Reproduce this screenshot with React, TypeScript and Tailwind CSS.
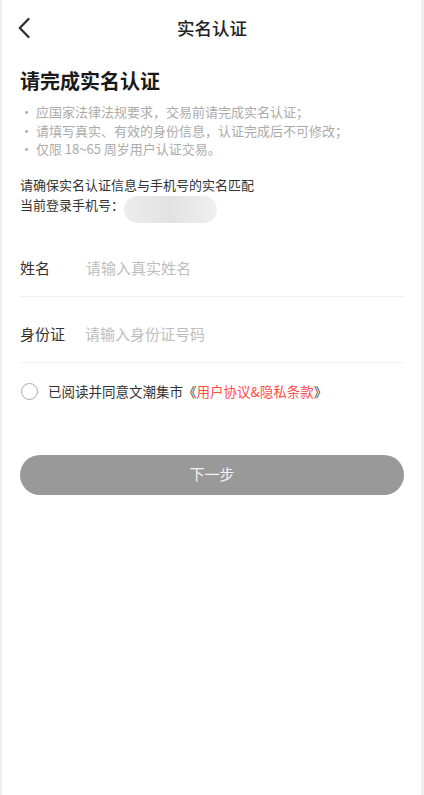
import React from "react";

export default function App() {
  return (
    <div
      className="w-full min-h-[795px] bg-white border-l-2 border-r-[3px] border-[#efefef] pl-[18px] pr-[17px]"
      style={{ fontFamily: '"Noto Sans CJK SC", "Noto Sans", sans-serif' }}
    >
      {/* Header */}
      <div className="relative h-[56px] flex items-center justify-center">
        <div className="absolute left-[-3px] top-[17px]">
          <svg width="14" height="22" viewBox="0 0 14 22" fill="none">
            <path d="M11.5 2 L2.8 11 L11.5 20" stroke="#333333" strokeWidth="2.4" strokeLinecap="round" strokeLinejoin="round" />
          </svg>
        </div>
        <span className="text-[17.5px] font-medium text-[#222] leading-none">实名认证</span>
      </div>

      {/* Heading */}
      <h1 className="mt-[11px] text-[20px] leading-[28px] font-bold text-[#1a1a1a]">请完成实名认证</h1>

      {/* Bullets */}
      <div className="mt-[8px] text-[13px] leading-[18.5px] text-[#ababab]">
        <p>· 应国家法律法规要求，交易前请完成实名认证；</p>
        <p>· 请填写真实、有效的身份信息，认证完成后不可修改；</p>
        <p>· 仅限 18~65 周岁用户认证交易。</p>
      </div>

      {/* Phone notice */}
      <div className="mt-[16px] text-[13px] leading-[20px] text-[#333]">
        <p>请确保实名认证信息与手机号的实名匹配</p>
        <div className="flex items-start">
          <span>当前登录手机号：</span>
          <div className="mt-[1px] h-[27px] w-[93px] rounded-full bg-gradient-to-r from-[#ededed] via-[#e2e2e2] to-[#f0f0f0]" />
        </div>
      </div>

      {/* Fields */}
      <div className="mt-[8px]">
        <div className="h-[66px] pt-[11px] flex items-center border-b border-[#f0f2f2]">
          <span className="w-[66px] text-[15px] text-[#333]">姓名</span>
          <span className="text-[15px] text-[#bdbdbd]">请输入真实姓名</span>
        </div>
        <div className="h-[66px] pt-[11px] flex items-center border-b border-[#f0f2f2]">
          <span className="w-[65px] text-[15px] text-[#333]">身份证</span>
          <span className="text-[15px] text-[#bdbdbd]">请输入身份证号码</span>
        </div>
      </div>

      {/* Agreement */}
      <div className="mt-[19px] flex items-center h-[20px]">
        <div className="w-[17px] h-[17px] rounded-full border-[1.5px] border-[#aaaaaa] ml-[1px]" />
        <span className="ml-[10px] text-[13.5px] text-[#333]">
          已阅读并同意文潮集市《<span className="text-[#ff4d4d]">用户协议&amp;隐私条款</span>》
        </span>
      </div>

      {/* Button */}
      <button className="mt-[53px] w-full h-[40px] rounded-full bg-[#999999] text-[15px] text-[#f2f2f2] flex items-center justify-center">
        下一步
      </button>
    </div>
  );
}
